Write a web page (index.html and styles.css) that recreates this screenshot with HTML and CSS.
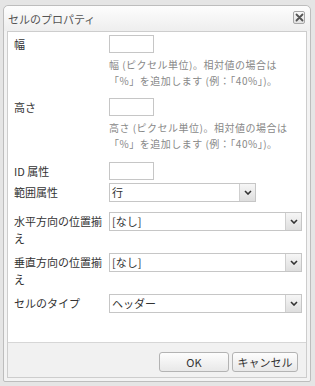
FILE: index.html
```html
<!DOCTYPE html>
<html lang="ja">
<head>
<meta charset="utf-8">
<title>セルのプロパティ</title>
<link rel="stylesheet" href="styles.css">
</head>
<body>
<div class="dialog">
  <div class="titlebar">
    <span class="title">セルのプロパティ</span>
    <span class="close"><svg width="9" height="9" viewBox="0 0 9 9"><path d="M1.5 1.5 L7.5 7.5 M7.5 1.5 L1.5 7.5" stroke="#555" stroke-width="1.8" stroke-linecap="round"/></svg></span>
  </div>
  <div class="panel">
    <div class="content">
      <div class="row r-width">
        <div class="label">幅</div>
        <div class="field">
          <div class="input"></div>
          <div class="help">幅 (ピクセル単位)。相対値の場合は<br>「%」を追加します (例：「40%」)。</div>
        </div>
      </div>
      <div class="row r-height">
        <div class="label">高さ</div>
        <div class="field">
          <div class="input"></div>
          <div class="help">高さ (ピクセル単位)。相対値の場合は<br>「%」を追加します (例：「40%」)。</div>
        </div>
      </div>
      <div class="row r-id">
        <div class="label">ID 属性</div>
        <div class="field"><div class="input"></div></div>
      </div>
      <div class="row r-scope">
        <div class="label">範囲属性</div>
        <div class="field">
          <div class="select narrow"><span class="value">行</span><span class="arrow"><svg width="8" height="5" viewBox="0 0 8 5"><path d="M1 1 L4 4 L7 1" fill="none" stroke="#333" stroke-width="1.6"/></svg></span></div>
        </div>
      </div>
      <div class="row r-halign">
        <div class="label">水平方向の位置揃え</div>
        <div class="field">
          <div class="select"><span class="value">[なし]</span><span class="arrow"><svg width="8" height="5" viewBox="0 0 8 5"><path d="M1 1 L4 4 L7 1" fill="none" stroke="#333" stroke-width="1.6"/></svg></span></div>
        </div>
      </div>
      <div class="row r-valign">
        <div class="label">垂直方向の位置揃え</div>
        <div class="field">
          <div class="select"><span class="value">[なし]</span><span class="arrow"><svg width="8" height="5" viewBox="0 0 8 5"><path d="M1 1 L4 4 L7 1" fill="none" stroke="#333" stroke-width="1.6"/></svg></span></div>
        </div>
      </div>
      <div class="row r-type">
        <div class="label">セルのタイプ</div>
        <div class="field">
          <div class="select"><span class="value">ヘッダー</span><span class="arrow"><svg width="8" height="5" viewBox="0 0 8 5"><path d="M1 1 L4 4 L7 1" fill="none" stroke="#333" stroke-width="1.6"/></svg></span></div>
        </div>
      </div>
    </div>
    <div class="footer">
      <button class="btn ok">OK</button>
      <button class="btn cancel">キャンセル</button>
    </div>
  </div>
</div>
</body>
</html>
```
FILE: styles.css
```css
html, body {
  margin: 0;
  padding: 0;
}
body {
  background: #e5e5e5;
  font-family: "Noto Sans CJK JP", "Noto Sans", sans-serif;
  color: #333;
  width: 315px;
  height: 386px;
  overflow: hidden;
}
.dialog {
  box-sizing: border-box;
  margin: 5px 0 0 3px;
  width: 308px;
  background: #f3f3f3;
  border: 1px solid #bdbdbd;
  border-radius: 5px 5px 2px 2px;
}
.titlebar {
  height: 25px;
  display: flex;
  align-items: center;
  justify-content: space-between;
  padding: 0 5px 0 4px;
  background: linear-gradient(#fdfdfd, #eeeeee);
  border-radius: 5px 5px 0 0;
}
.title {
  font-size: 11px;
  color: #555;
  line-height: 14px;
}
.close {
  box-sizing: border-box;
  width: 12px;
  height: 13px;
  border: 1px solid #a8a8a8;
  border-radius: 2px;
  background: linear-gradient(#fafafa, #e2e2e2);
  display: flex;
  align-items: center;
  justify-content: center;
  margin-top: -2px;
}
.panel {
  margin: 0 3px 3px 3px;
  border: 1px solid #cdcdcd;
  background: #f1f1f1;
}
.content {
  box-sizing: border-box;
  height: 311px;
  background: #fff;
  border-bottom: 1px solid #d6d6d6;
  padding: 3px 0 0 6px;
}
.row {
  display: flex;
  align-items: flex-start;
}
.label {
  width: 95px;
  flex: none;
  font-size: 11px;
  line-height: 18px;
  color: #333;
}
.r-halign .label, .r-valign .label {
  line-height: 17px;
  padding-top: 1px;
}
.r-width { margin-bottom: 9px; }
.r-height { margin-bottom: 10px; }
.r-id { margin-bottom: 3px; }
.r-scope { margin-bottom: 10px; }
.r-halign { margin-bottom: 6px; }
.r-valign { margin-bottom: 6px; }
.input {
  box-sizing: border-box;
  width: 45px;
  height: 18px;
  border: 1px solid #c6c6c6;
  background: #fff;
}
.help {
  margin-top: 4px;
  font-size: 10px;
  line-height: 16px;
  letter-spacing: 0.5px;
  color: #888;
  white-space: nowrap;
}
.select {
  box-sizing: border-box;
  width: 193px;
  height: 19px;
  border: 1px solid #c6c6c6;
  background: #fff;
  display: flex;
  align-items: stretch;
}
.select.narrow {
  width: 147px;
}
.value {
  flex: 1;
  font-size: 11px;
  line-height: 17px;
  padding-left: 2px;
  color: #333;
}
.arrow {
  width: 15px;
  border-left: 1px solid #cfcfcf;
  background: linear-gradient(#f6f6f6, #dedede);
  display: flex;
  align-items: center;
  justify-content: center;
}
.footer {
  height: 34px;
  box-sizing: border-box;
  display: flex;
  justify-content: flex-end;
  gap: 3px;
  padding: 9px 8px 0 0;
}
.btn {
  box-sizing: border-box;
  height: 20px;
  border: 1px solid #b3b3b3;
  border-radius: 3px;
  background: linear-gradient(#fdfdfd, #e8e8e8);
  font-family: "Noto Sans CJK JP", "Noto Sans", sans-serif;
  font-size: 11px;
  color: #333;
  padding: 0;
  line-height: 16px;
}
.ok { width: 70px; }
.cancel { width: 66px; }
```
